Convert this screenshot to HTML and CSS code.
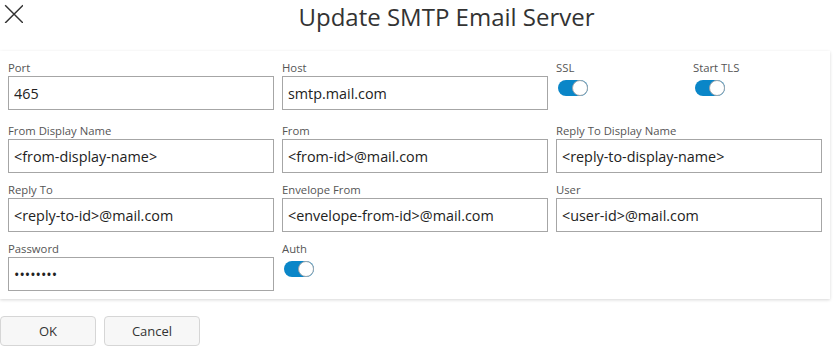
FILE: index.html
```html
<!DOCTYPE html>
<html>
<head>
<meta charset="utf-8">
<link rel="stylesheet" href="styles.css">
</head>
<body>
<div class="dialog">
  <div class="header">
    <div class="close">
      <svg width="20" height="20" viewBox="0 0 20 20"><path d="M3.5 3.5 L20.5 20.5 M20.5 3.5 L3.5 20.5" stroke="#333" stroke-width="1.4" fill="none" transform="translate(-0.5,-0.5)"/></svg>
    </div>
    <div class="title">Update SMTP Email Server</div>
  </div>
  <div class="card">
    <div class="field"><label class="lbl">Port</label><input class="inp" value="465"></div>
    <div class="field"><label class="lbl">Host</label><input class="inp" value="smtp.mail.com"></div>
    <div class="split">
      <div class="field"><label class="lbl">SSL</label><span class="toggle"><span class="knob"></span></span></div>
      <div class="field"><label class="lbl">Start TLS</label><span class="toggle"><span class="knob"></span></span></div>
    </div>
    <div class="field"><label class="lbl">From Display Name</label><input class="inp" value="<from-display-name>"></div>
    <div class="field"><label class="lbl">From</label><input class="inp" value="<from-id>@mail.com"></div>
    <div class="field"><label class="lbl">Reply To Display Name</label><input class="inp" value="<reply-to-display-name>"></div>
    <div class="field"><label class="lbl">Reply To</label><input class="inp" value="<reply-to-id>@mail.com"></div>
    <div class="field"><label class="lbl">Envelope From</label><input class="inp" value="<envelope-from-id>@mail.com"></div>
    <div class="field"><label class="lbl">User</label><input class="inp" value="<user-id>@mail.com"></div>
    <div class="field"><label class="lbl">Password</label><input class="inp" type="password" value="12345678"></div>
    <div class="field"><label class="lbl">Auth</label><span class="toggle"><span class="knob"></span></span></div>
  </div>
  <div class="actions">
    <button class="btn">OK</button>
    <button class="btn">Cancel</button>
  </div>
</div>
</body>
</html>
```
FILE: styles.css
```css
html, body {
  margin: 0;
  padding: 0;
  background: #fff;
  font-family: "Open Sans", "Liberation Sans", sans-serif;
  color: #333;
}
.dialog {
  width: 833px;
}
.header {
  display: flex;
  height: 51px;
}
.close {
  width: 60px;
  padding: 2px 0 0 2px;
  box-sizing: border-box;
}
.close svg {
  display: block;
  width: 21px;
  height: 21px;
}
.title {
  flex: 1;
  text-align: center;
  font-size: 24px;
  line-height: 33px;
  color: #333;
}
.card {
  width: 830px;
  box-sizing: border-box;
  padding: 8px;
  display: grid;
  grid-template-columns: 266px 266px 266px;
  grid-template-rows: 55px auto auto auto;
  column-gap: 8px;
  row-gap: 8px;
  box-shadow: 0 1px 3px rgba(0,0,0,0.16);
}
.split {
  display: grid;
  grid-template-columns: 129px 129px;
  column-gap: 8px;
  align-items: start;
}
.field {
  display: flex;
  flex-direction: column;
  align-items: flex-start;
}
.lbl {
  font-size: 11.3px;
  line-height: 17px;
  color: #555;
}
.inp {
  width: 266px;
  height: 34px;
  box-sizing: border-box;
  border: 1px solid #a6a6a6;
  border-radius: 0;
  padding: 0 5px;
  margin: 0;
  font-family: "Open Sans", "Liberation Sans", sans-serif;
  font-size: 14.35px;
  color: #222;
  outline: none;
}
.toggle {
  position: relative;
  display: block;
  width: 30px;
  height: 16px;
  margin: 4px 0 0 2px;
  background: #0a86c8;
  border-radius: 8px;
}
.knob {
  position: absolute;
  right: 0;
  top: 0;
  width: 16px;
  height: 16px;
  box-sizing: border-box;
  border-radius: 50%;
  background: #fff;
  border: 1px solid #9aa5ad;
}
.actions {
  display: flex;
  gap: 8px;
  margin-top: 17px;
}
.btn {
  width: 96px;
  height: 30px;
  box-sizing: border-box;
  background: #f7f7f7;
  border: 1px solid #d6d6d6;
  border-radius: 4px;
  font-family: "Open Sans", "Liberation Sans", sans-serif;
  font-size: 13px;
  color: #333;
  padding: 0;
}
```
